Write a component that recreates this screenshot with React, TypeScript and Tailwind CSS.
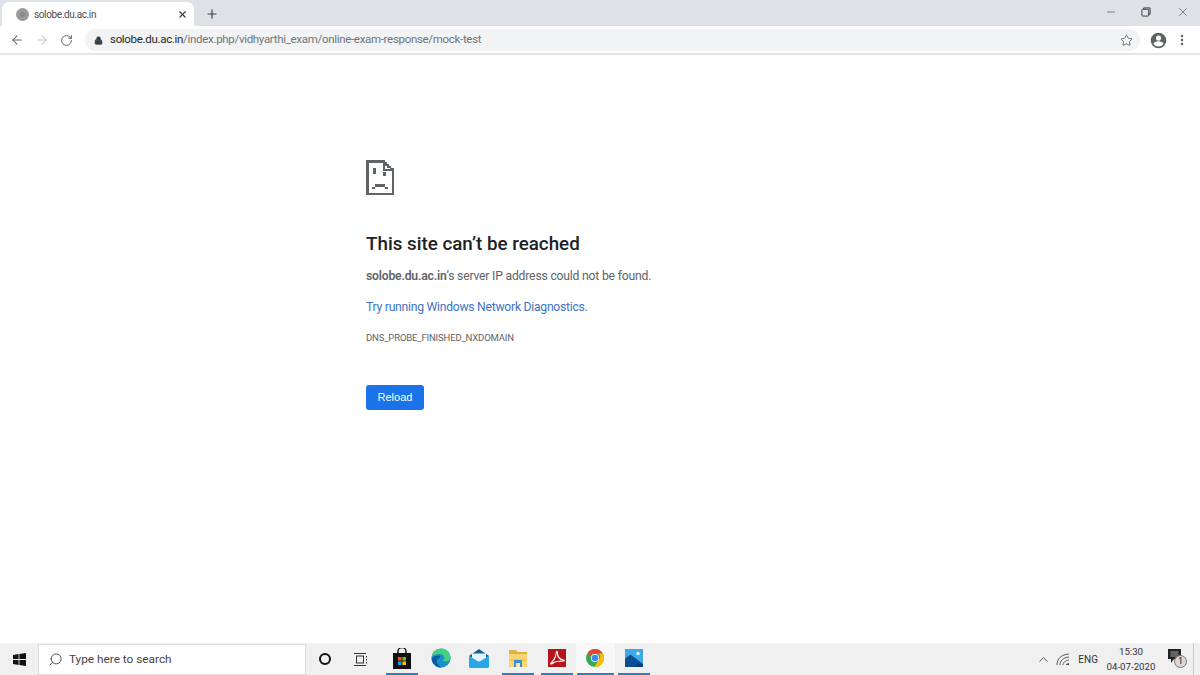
import { ArrowLeft, ArrowRight, RotateCw, Lock, Star, X, Plus, Minus, EllipsisVertical, Search, ChevronUp } from 'lucide-react';

const ui = "font-['Roboto','Noto_Sans',sans-serif]";

function SadPage() {
  return (
    <svg width="28" height="35" viewBox="0 0 28 35" fill="#5f6368" shapeRendering="crispEdges">
      <path d="M0 0H19V2H21V4H23V6H25V8H28V35H0ZM2.500 2.500V32.500H25.500V11H16.500V2.500ZM19 4.500V8.500H23.500V8H21V6H19Z" fillRule="evenodd" />
      <rect x="7" y="8" width="2.500" height="6" />
      <rect x="17" y="12" width="2.500" height="4" />
      <path d="M6 27H8.500V24H19V27H21.500V29H19V26.500H8.500V29H6Z" />
    </svg>
  );
}

function Profile() {
  return (
    <svg width="17" height="17" viewBox="0 0 24 24" fill="#5f6368">
      <path d="M12 1a11 11 0 1 0 0 22 11 11 0 0 0 0-22Zm0 4a3.600 3.600 0 1 1 0 7.200A3.600 3.600 0 0 1 12 5Zm0 15.400a8.600 8.600 0 0 1-7-3.600c.1-2.300 4.700-3.600 7-3.600s6.900 1.300 7 3.600a8.600 8.600 0 0 1-7 3.600Z" />
    </svg>
  );
}

function RestoreIcon() {
  return (
    <svg width="10" height="10" viewBox="0 0 11 11" fill="none" stroke="#3c4043" strokeWidth="1.100">
      <path d="M3 2.500V1h7v7H8.500" />
      <rect x="1" y="2.500" width="7.500" height="7.500" rx="1" />
    </svg>
  );
}

function WindowsLogo() {
  return (
    <svg width="13" height="13" viewBox="0 0 13 13" fill="#111">
      <path d="M0 2 5.600 1.100V6H0ZM6.400 1 13 0V6H6.400ZM0 7h5.600v4.900L0 11ZM6.400 7H13v6l-6.600-1Z" />
    </svg>
  );
}

function TaskView() {
  return (
    <svg width="14" height="13" viewBox="0 0 14 13" fill="none" stroke="#333" strokeWidth="1">
      <rect x="2.500" y="3" width="7" height="7" />
      <path d="M0 .5h12M0 12.500h12M12.500 3v1.500M12.500 6v1.500M12.500 9v1.500" />
    </svg>
  );
}

function StoreIcon() {
  return (
    <svg width="20" height="21" viewBox="0 0 20 21">
      <path d="M6 6V3.500a4 4 0 0 1 8 0V6" fill="none" stroke="#111" strokeWidth="1.500" />
      <rect x="1" y="5" width="18" height="16" fill="#111" />
      <rect x="6" y="9" width="3.600" height="3.600" fill="#f25022" />
      <rect x="10.400" y="9" width="3.600" height="3.600" fill="#7fba00" />
      <rect x="6" y="13.400" width="3.600" height="3.600" fill="#00a4ef" />
      <rect x="10.400" y="13.400" width="3.600" height="3.600" fill="#ffb900" />
    </svg>
  );
}

function EdgeIcon() {
  return (
    <svg width="20" height="20" viewBox="0 0 20 20">
      <circle cx="10" cy="10" r="9.600" fill="#1a8fc9" />
      <path d="M.6 9C2 3.500 6 .4 10 .4c5 0 9.600 3.800 9.600 9.400 0 2.600-2.400 3.600-4.400 3.600-1.600 0-3-.5-3.400-1.200 1.600-.6 2-2 1.400-3.200C12.600 6.600 10.400 5.800 8 6 4.600 6.300 1.600 7.600.6 9Z" fill="#45d07f" />
      <path d="M9 9.500c-3 .5-4 3-3 5.500.8 2 2.800 3.600 5 4.500-5 .6-10-3-10.400-9C2 8.500 5.500 7 8 7.500c1 .2 1.500 1 1 2Z" fill="#0c59a4" />
    </svg>
  );
}

function MailIcon() {
  return (
    <svg width="20" height="19" viewBox="0 0 20 19">
      <path d="M10 0 20 7 10 13 0 7Z" fill="#0b62a8" />
      <path d="M3 4.500h14V9l-7 4-7-4Z" fill="#e8f4fb" />
      <path d="M0 7v10.500A1.500 1.500 0 0 0 1.500 19h17a1.500 1.500 0 0 0 1.500-1.500V7l-10 6Z" fill="#29a6e6" />
    </svg>
  );
}

function FolderIcon() {
  return (
    <svg width="18" height="18" viewBox="0 0 18 18">
      <path d="M0 1h7l2 2h9v3H0Z" fill="#e4b03c" />
      <rect y="5" width="18" height="13" fill="#f7d774" />
      <path d="M0 10h18v2H0Z" fill="#f0c75a" />
      <rect x="5" y="11" width="8" height="7" fill="#3d8fd1" />
      <rect x="7" y="14" width="4" height="4" fill="#f7e8b0" />
    </svg>
  );
}

function AcrobatIcon() {
  return (
    <svg width="18" height="18" viewBox="0 0 18 18">
      <rect width="18" height="18" fill="#b5141b" />
      <path d="M2.500 14.500C5 13 8 8 8.300 3.500c.1-1.500 1.400-1 1.200.5-.5 4 3 7 6 7 1.200 0 1 1-.3 1-3.500 0-8.200.5-10 2-1.200 1-3 1.300-2.700.5Z" fill="none" stroke="#fff" strokeWidth="1.100" />
    </svg>
  );
}

function ChromeIcon() {
  return (
    <svg width="18" height="18" viewBox="0 0 18 18">
      <circle cx="9" cy="9" r="9" fill="#34a853" />
      <path d="M9 0a9 9 0 0 1 7.800 4.500H9a4.500 4.500 0 0 0-4.200 3L1.700 3.700A9 9 0 0 1 9 0Z" fill="#ea4335" />
      <path d="M16.800 4.500A9 9 0 0 1 8.500 18l3.800-6.500a4.500 4.500 0 0 0 .2-7Z" fill="#fbbc05" />
      <circle cx="9" cy="9" r="4" fill="#fff" />
      <circle cx="9" cy="9" r="3.200" fill="#4285f4" />
    </svg>
  );
}

function PhotosIcon() {
  return (
    <svg width="18" height="18" viewBox="0 0 18 18">
      <rect width="18" height="18" fill="#3fa9e8" />
      <circle cx="13" cy="4.500" r="1.700" fill="#e6f5fd" />
      <path d="M0 18V9.500L5.500 5.500 18 15v3Z" fill="#0f4d92" />
      <path d="M9 18l4-4 5 2v2Z" fill="#0a3c78" />
    </svg>
  );
}

function WifiIcon() {
  return (
    <svg width="14" height="13" viewBox="0 0 14 13" fill="none" stroke="#444" strokeWidth="0.9">
      <path d="M1 12C1 6 5 1.500 13 1M4 12c0-4 3-7.500 9-8M7 12c0-2 2-4.500 6-5" />
      <path d="M10 12c0-1 1.500-2 3-2v2Z" fill="#444" stroke="none" />
    </svg>
  );
}

function Notifications() {
  return (
    <div className="relative ml-[13px] h-[20px] w-[21px]">
      <svg width="14" height="15" viewBox="0 0 14 15" fill="#222">
        <path d="M0 0h13v10H6l-3 4v-4H0Z" />
        <path d="M2.500 3h8M2.500 5h8M2.500 7h8" stroke="#ddd" strokeWidth="0.7" />
      </svg>
      <span className="absolute left-[6px] top-[6px] flex h-[13px] w-[13px] items-center justify-center rounded-full border border-[#777] bg-[#d8d8d8] text-[9px] leading-none text-[#222]">
        1
      </span>
    </div>
  );
}

const taskItems = [
  { icon: <StoreIcon />, line: 'w-[32px] bg-[#2f7fc1]', open: false },
  { icon: <EdgeIcon />, line: 'w-[32px] bg-transparent', open: false },
  { icon: <MailIcon />, line: 'w-[32px] bg-transparent', open: false },
  { icon: <FolderIcon />, line: 'w-[32px] bg-[#2f7fc1]', open: false },
  { icon: <AcrobatIcon />, line: 'w-[32px] bg-[#2f7fc1]', open: false },
  { icon: <ChromeIcon />, line: 'w-[37px] bg-[#2f7fc1]', open: true },
  { icon: <PhotosIcon />, line: 'w-[32px] bg-[#2f7fc1]', open: false },
];

export default function App() {
  return (
    <div className={`flex h-[675px] w-[1200px] flex-col overflow-hidden bg-white ${ui}`}>
      {/* tab strip */}
      <div className="flex h-[26px] shrink-0 bg-[#dee1e6]">
        <div className="ml-[2px] mt-[2px] flex h-[24px] w-[192px] items-center rounded-t-[7px] bg-white pl-[14px] pr-[6px]">
          <span className="flex h-[13px] w-[13px] items-center justify-center rounded-full bg-[#9a9a9a]">
            <span className="h-[5px] w-[5px] rounded-full bg-[#8a8a8a]" />
          </span>
          <span className="ml-[5px] flex-1 text-[10px] tracking-[-0.37px] text-[#4a4d51]">solobe.du.ac.in</span>
          <X size={11} strokeWidth={2.4} color="#3c4043" />
        </div>
        <div className="ml-[11px] flex items-center pt-[1px]">
          <Plus size={14} strokeWidth={2} color="#3c4043" />
        </div>
        <div className="ml-auto flex items-center pb-[3px]">
          <Minus size={12} strokeWidth={1.200} color="#3c4043" />
          <div className="ml-[24px] flex">
            <RestoreIcon />
          </div>
          <div className="ml-[25px] mr-[10px] flex">
            <X size={14} strokeWidth={1} color="#3c4043" />
          </div>
        </div>
      </div>

      {/* toolbar */}
      <div className="flex h-[29px] shrink-0 items-center border-b-2 border-[#e4e5e7] bg-white pt-[1px]">
        <ArrowLeft size={14} color="#5f6368" strokeWidth={1.800} className="ml-[10px]" />
        <ArrowRight size={14} color="#c2c4c7" strokeWidth={1.800} className="ml-[11px]" />
        <RotateCw size={13} color="#5f6368" strokeWidth={1.800} className="ml-[11px]" />
        <div className="ml-[12px] flex h-[22px] w-[1055px] items-center rounded-full bg-[#f1f3f4] pl-[9px] pr-[7px]">
          <Lock size={9} color="#3c4043" fill="#3c4043" strokeWidth={2} />
          <span className="ml-[7px] flex-1 text-[11.500px] tracking-[-0.31px] text-[#70757a]">
            <span className="text-[#26282b]">solobe.du.ac.in</span>/index.php/vidhyarthi_exam/online-exam-response/mock-test
          </span>
          <Star size={13} color="#5f6368" strokeWidth={1.600} />
        </div>
        <div className="ml-[10px] flex">
          <Profile />
        </div>
        <EllipsisVertical size={14} color="#5f6368" strokeWidth={2.200} className="ml-[8px]" />
      </div>

      {/* error page */}
      <main className="flex-1 pl-[366px] pt-[105px]">
        <SadPage />
        <h1 className="mt-[36px] text-[18.800px] font-medium leading-[26px] text-[#202124]">This site can&rsquo;t be reached</h1>
        <p className="mt-[9px] text-[12.200px] leading-[20px] tracking-[-0.2px] text-[#5f6368]">
          <b className="font-semibold">solobe.du.ac.in</b>&rsquo;s server IP address could not be found.
        </p>
        <p className="mt-[11px] text-[12.200px] leading-[20px] tracking-[-0.27px] text-[#3f74c4]">Try running Windows Network Diagnostics.</p>
        <p className="mt-[11px] text-[9.500px] leading-[20px] tracking-[-0.15px] text-[#5f6368]">DNS_PROBE_FINISHED_NXDOMAIN</p>
        <button className="mt-[37px] flex h-[25px] w-[58px] items-center justify-center rounded-[3px] bg-[#1a73e8] font-['Liberation_Sans',sans-serif] text-[11px] text-white">
          Reload
        </button>
      </main>

      {/* taskbar */}
      <div className="flex h-[32px] shrink-0 items-center bg-[#f0f0f0]">
        <div className="flex w-[38px] justify-center">
          <WindowsLogo />
        </div>
        <div className="flex h-[31px] w-[268px] items-center self-end border border-[#dcdcdc] bg-white pl-[9px]">
          <Search size={15} color="#333" strokeWidth={1.300} className="-scale-x-100" />
          <span className="ml-[6px] text-[11.800px] text-[#444]">Type here to search</span>
        </div>
        <div className="ml-[13px] h-[12px] w-[12px] rounded-full border-2 border-[#111]" />
        <div className="ml-[23px] flex">
          <TaskView />
        </div>
        <div className="ml-[15px] flex h-full">
          {taskItems.map((item, i) => (
            <div key={i} className={`flex h-full w-[38.600px] flex-col items-center ${item.open ? 'bg-[#f8f8f8]' : ''}`}>
              <div className="flex flex-1 items-center justify-center">{item.icon}</div>
              <div className={`h-[2px] ${item.line}`} />
            </div>
          ))}
        </div>
        <div className="ml-auto flex h-full items-center pr-[3px]">
          <ChevronUp size={15} color="#333" strokeWidth={1.300} />
          <div className="ml-[5px] flex">
            <WifiIcon />
          </div>
          <span className="ml-[8px] text-[10px] text-[#333]">ENG</span>
          <div className="ml-[9px] flex w-[48px] flex-col items-center whitespace-nowrap text-[9.700px] leading-[15px] text-[#333]">
            <span>15:30</span>
            <span>04-07-2020</span>
          </div>
          <Notifications />
          <div className="ml-[4px] h-full border-l border-[#c8c8c8] pl-[3px]" />
        </div>
      </div>
    </div>
  );
}
